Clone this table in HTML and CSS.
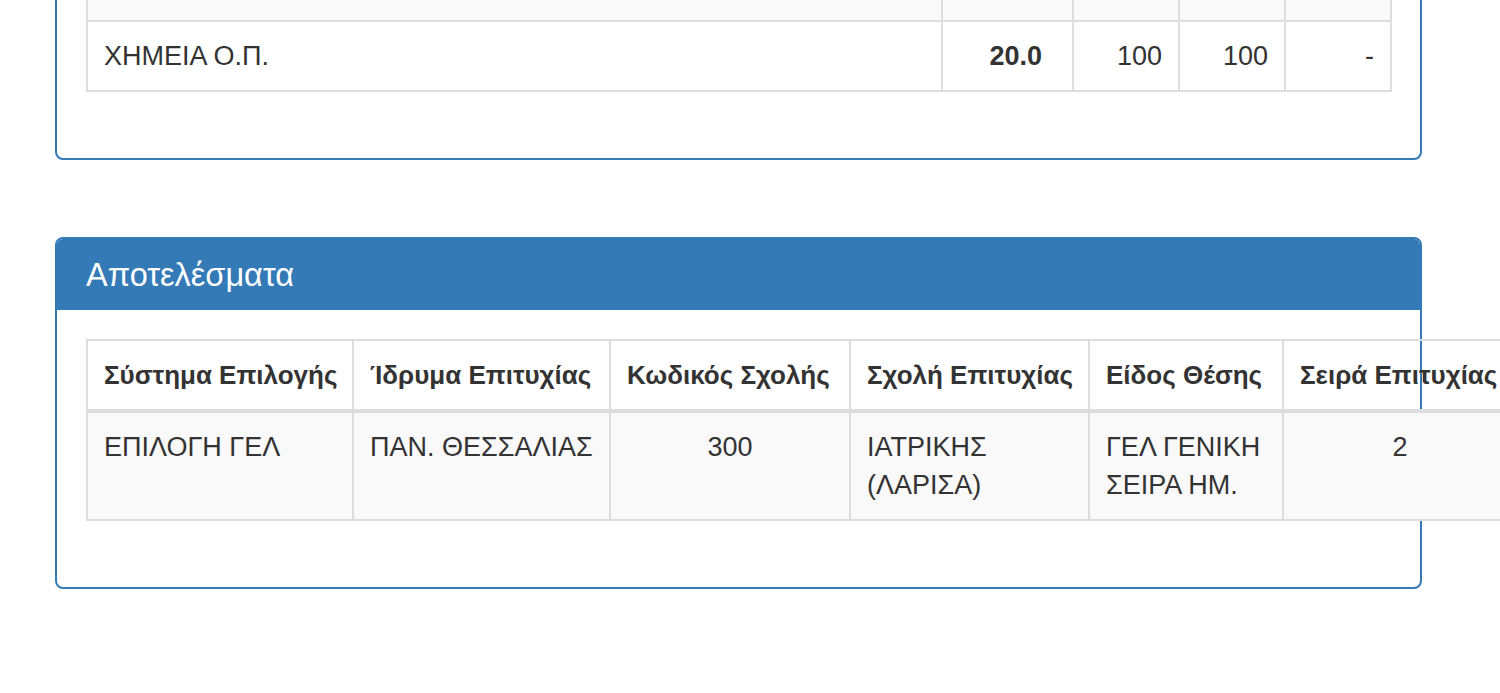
FILE: index.html
```html
<!DOCTYPE html>
<html lang="el">
<head>
<meta charset="utf-8">
<title>Αποτελέσματα</title>
<link rel="stylesheet" href="styles.css">
</head>
<body>
<div class="page">
  <section class="panel">
    <div class="panel-heading">Βαθμολογίες</div>
    <div class="panel-body">
      <table class="table table-striped grades">
        <colgroup>
          <col class="c-subject"><col class="c-grade"><col class="c-num"><col class="c-num"><col class="c-num">
        </colgroup>
        <thead>
          <tr><th>Μάθημα</th><th class="num">Βαθμός</th><th class="num">Γραπτά</th><th class="num">Προφ.</th><th class="num">Συντ.</th></tr>
        </thead>
        <tbody>
          <tr><td>ΒΙΟΛΟΓΙΑ Ο.Π.</td><td class="num grade"><b>19.8</b></td><td class="num">99</td><td class="num">99</td><td class="num">-</td></tr>
          <tr><td>ΧΗΜΕΙΑ Ο.Π.</td><td class="num grade"><b>20.0</b></td><td class="num">100</td><td class="num">100</td><td class="num">-</td></tr>
        </tbody>
      </table>
    </div>
  </section>

  <section class="panel">
    <div class="panel-heading">Αποτελέσματα</div>
    <div class="panel-body">
      <table class="table table-striped results">
        <colgroup>
          <col class="r1"><col class="r2"><col class="r3"><col class="r4"><col class="r5"><col class="r6">
        </colgroup>
        <thead>
          <tr>
            <th>Σύστημα Επιλογής</th>
            <th>Ίδρυμα Επιτυχίας</th>
            <th>Κωδικός Σχολής</th>
            <th>Σχολή Επιτυχίας</th>
            <th>Είδος Θέσης</th>
            <th>Σειρά Επιτυχίας</th>
          </tr>
        </thead>
        <tbody>
          <tr>
            <td>ΕΠΙΛΟΓΗ ΓΕΛ</td>
            <td>ΠΑΝ. ΘΕΣΣΑΛΙΑΣ</td>
            <td class="center">300</td>
            <td>ΙΑΤΡΙΚΗΣ (ΛΑΡΙΣΑ)</td>
            <td>ΓΕΛ ΓΕΝΙΚΗ ΣΕΙΡΑ ΗΜ.</td>
            <td class="center">2</td>
          </tr>
        </tbody>
      </table>
    </div>
  </section>
</div>
</body>
</html>
```

FILE: styles.css
```css
html {
  overflow: hidden;
}

body {
  margin: 0;
  background: #fff;
  color: #333;
  font-family: "Liberation Sans", Arial, Helvetica, sans-serif;
  font-size: 27px;
  line-height: 38px;
}

.page {
  margin-top: -224px;
  padding-left: 55px;
}

.panel {
  box-sizing: border-box;
  width: 1367px;
  border: 2px solid #337ab7;
  border-radius: 8px;
  background: #fff;
  margin-bottom: 77px;
}

.panel-heading {
  background: #337ab7;
  color: #fff;
  padding: 19px 29px 18px;
  font-size: 32.5px;
  line-height: 34px;
  border-radius: 6px 6px 0 0;
}

.panel-body {
  padding: 29px;
}

.table {
  border-collapse: collapse;
  border-spacing: 0;
  margin-bottom: 37px;
  table-layout: fixed;
}

.table th,
.table td {
  border: 2px solid #ddd;
  padding: 15px 16px;
  vertical-align: top;
  text-align: left;
}

.table thead th {
  border-bottom-width: 4px;
  font-size: 26px;
  font-weight: bold;
  white-space: nowrap;
}

.table-striped tbody tr:nth-child(odd) {
  background: #f9f9f9;
}

.grades {
  width: 100%;
}

.grades .c-subject { width: 855px; }
.grades .c-grade { width: 131px; }
.grades .c-num { width: 106px; }

.num {
  text-align: right !important;
}

.grades td.grade {
  padding-right: 30px;
}

.center {
  text-align: center !important;
}

.results {
  width: 1432px;
}

.results .r1 { width: 266px; }
.results .r2 { width: 257px; }
.results .r3 { width: 240px; }
.results .r4 { width: 239px; }
.results .r5 { width: 194px; }
.results .r6 { width: 234px; }
```
